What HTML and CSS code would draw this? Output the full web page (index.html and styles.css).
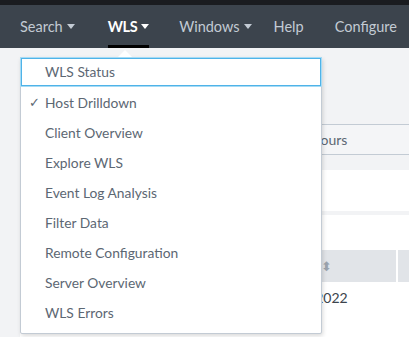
FILE: index.html
```html
<!DOCTYPE html>
<html lang="en">
  <head>
    <meta charset="UTF-8" />
    <title>WLS - Host Drilldown</title>
    <link rel="stylesheet" href="styles.css">
  </head>
  <body>
    <div class="top-strip"></div>
    <nav class="app-bar">
      <a class="nav-item nav-search">Search <span class="caret"></span></a>
      <a class="nav-item nav-wls active">WLS <span class="caret"></span></a>
      <a class="nav-item nav-windows">Windows <span class="caret"></span></a>
      <a class="nav-item nav-help">Help</a>
      <a class="nav-item">Configure</a>
    </nav>

    <main class="page">
      <div class="time-row">
        <span class="time-picker">Last 24 hours</span>
      </div>
      <div class="panel panel-short"></div>
      <div class="panel panel-table">
        <div class="table-head">
          <div class="th">Time <span class="sort">&#x2B0D;</span></div>
          <div class="th th-last"></div>
        </div>
        <div class="table-row">
          <div class="td">01/04/2022<br><span class="sub">server</span></div>
        </div>
      </div>
    </main>

    <div class="dropdown">
      <div class="dropdown-arrow"></div>
      <ul class="menu">
        <li class="menu-item focused">WLS Status</li>
        <li class="menu-item checked"><span class="check">&#x2713;</span>Host Drilldown</li>
        <li class="menu-item">Client Overview</li>
        <li class="menu-item">Explore WLS</li>
        <li class="menu-item">Event Log Analysis</li>
        <li class="menu-item">Filter Data</li>
        <li class="menu-item">Remote Configuration</li>
        <li class="menu-item">Server Overview</li>
        <li class="menu-item">WLS Errors</li>
      </ul>
    </div>
  </body>
</html>
```

FILE: styles.css
```css
body {
  margin: 0;
  background-color: #f2f3f5;
  font-family: Lato, "Open Sans", sans-serif;
  overflow: hidden;
  height: 337px;
}
.top-strip {
  height: 5px;
  background-color: #1a1c20;
}
.app-bar {
  height: 43px;
  box-sizing: border-box;
  background-color: #3c444d;
  display: flex;
  align-items: stretch;
  padding-left: 20px;
  overflow: hidden;
}
.nav-item {
  color: #c3cbd4;
  font-size: 14.5px;
  display: flex;
  align-items: center;
  border-bottom: 3px solid transparent;
  padding-top: 2px;
  white-space: nowrap;
}
.nav-search {
  margin-right: 33px;
}
.nav-wls {
  margin-right: 30px;
  letter-spacing: -0.4px;
}
.nav-windows {
  margin-right: 22px;
}
.nav-help {
  margin-right: 31px;
}
.nav-item.active {
  color: #ffffff;
  font-weight: bold;
  border-bottom-color: #000;
}
.caret {
  display: inline-block;
  width: 0;
  height: 0;
  margin-left: 4px;
  border-left: 4px solid transparent;
  border-right: 4px solid transparent;
  border-top: 5px solid currentColor;
}
.page {
  padding-left: 20px;
}
.time-row {
  margin-top: 76px;
  height: 29px;
  border-top: 1px solid #c3cbd4;
  border-bottom: 1px solid #c3cbd4;
  background-color: #f4f5f7;
  display: flex;
  align-items: center;
}
.time-picker {
  margin-left: 244px;
  color: #5c6773;
  font-size: 14px;
}
.panel {
  background-color: #fff;
}
.panel-short {
  margin-top: 15px;
  height: 41px;
}
.panel-table {
  margin-top: 4px;
  height: 122px;
  box-sizing: border-box;
  padding-top: 35px;
}
.table-head {
  display: flex;
  height: 32px;
  background-color: #e1e4e8;
}
.th {
  flex: 0 0 378px;
  border-right: 2px solid #fff;
  display: flex;
  align-items: center;
  justify-content: flex-end;
  padding-right: 64px;
  box-sizing: border-box;
  color: #5c6773;
  font-size: 13px;
}
.th-last {
  flex: 1 1 auto;
  border-right: 0;
}
.sort {
  color: #9aa3ad;
  font-size: 13px;
  margin-left: 4px;
}
.table-row {
  padding: 8px 0 0 250px;
}
.td {
  font-size: 14px;
  color: #3c444d;
  line-height: 16px;
  width: 150px;
}
.td .sub {
  color: #5a4fb0;
}

.dropdown {
  position: absolute;
  top: 57px;
  left: 20px;
  width: 302px;
  background-color: #fff;
  border: 1px solid #c3cbd4;
  border-radius: 2px;
  box-shadow: 1px 2px 4px rgba(0, 0, 0, 0.15);
  box-sizing: border-box;
}
.dropdown-arrow {
  position: absolute;
  top: -8px;
  left: 96px;
  width: 0;
  height: 0;
  border-left: 8px solid transparent;
  border-right: 8px solid transparent;
  border-bottom: 8px solid #fff;
}
.menu {
  list-style: none;
  margin: 0;
  padding: 0 0 5px;
}
.menu-item {
  position: relative;
  height: 30px;
  line-height: 30px;
  padding-left: 24px;
  color: #5c6773;
  font-size: 13.8px;
  box-sizing: border-box;
}
.menu-item.focused {
  height: 28px;
  line-height: 26px;
  margin-bottom: 2px;
  border: 1px solid #4fb3e8;
  box-shadow: 0 0 0 1px #a6dbf5;
  padding-left: 23px;
}
.check {
  position: absolute;
  left: 8px;
  font-size: 13px;
  font-weight: bold;
  font-family: "DejaVu Sans", sans-serif;
  color: #5c6773;
}
```
